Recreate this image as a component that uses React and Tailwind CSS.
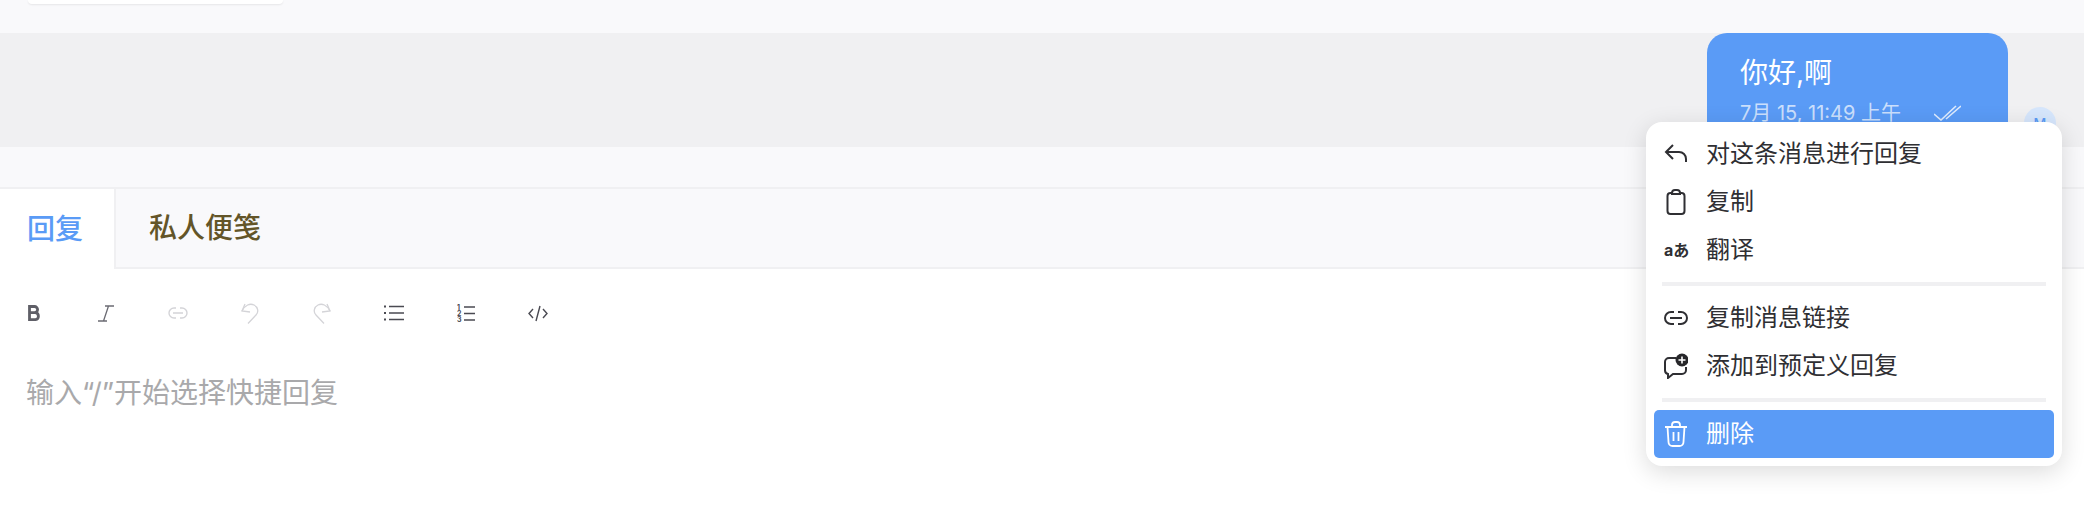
const cjk = "font-['Inter','Noto_Sans_CJK_SC',sans-serif]";

function BoldIcon() {
  return (
    <svg width="13" height="16" viewBox="0 0 13 16" fill="none" stroke="currentColor" strokeWidth="2.800">
      <path d="M1.500 1.500h5a3 3 0 0 1 0 6.200h-5zM1.500 7.700h6a3.500 3.500 0 0 1 0 6.900h-6z" />
    </svg>
  );
}

function ItalicIcon() {
  return (
    <svg width="16" height="17" viewBox="0 0 16 17" fill="none" stroke="currentColor" strokeWidth="1.300">
      <path d="M7 1h9M0 16h9M10.500 1L5.500 16" />
    </svg>
  );
}

function ChainIcon() {
  return (
    <svg width="20" height="12" viewBox="0 0 20 12" fill="none" stroke="currentColor" strokeWidth="1.400">
      <path d="M8 1H6a5 5 0 0 0 0 10h2M12 1h2a5 5 0 0 1 0 10h-2M5 6h10" />
    </svg>
  );
}

function UndoIcon({ flip }) {
  return (
    <svg width="18" height="21" viewBox="0 0 18 21" fill="none" stroke="currentColor" strokeWidth="1.300" className={flip ? "-scale-x-100" : ""}>
      <path d="M4 1L1 8l8 1" />
      <path d="M1 8C4 2 9 0 13 2c4 2 5 7 2 10l-8 8.500" />
    </svg>
  );
}

function ListIcon() {
  return (
    <svg width="20" height="16" viewBox="0 0 20 16" fill="none" stroke="currentColor" strokeWidth="1.500">
      <path d="M5 1.500h15M5 8h15M5 14.500h15" />
      <path d="M0 1.500h2M0 8h2M0 14.500h2" strokeWidth="1.800" />
    </svg>
  );
}

function OrderedIcon() {
  return (
    <svg width="18" height="18" viewBox="0 0 18 18" fill="none" stroke="currentColor" strokeWidth="1.500">
      <path d="M7 3h11M7 9.500h11M7 16h11" />
      <text x="0" y="5.500" fontSize="7" fontWeight="700" fill="currentColor" stroke="none">1</text>
      <text x="0" y="11.500" fontSize="7" fontWeight="700" fill="currentColor" stroke="none">2</text>
      <text x="0" y="17.500" fontSize="7" fontWeight="700" fill="currentColor" stroke="none">3</text>
    </svg>
  );
}

function CodeIcon() {
  return (
    <svg width="20" height="17" viewBox="0 0 20 17" fill="none" stroke="currentColor" strokeWidth="1.400">
      <path d="M5 4L1 8.500 5 13M15 4l4 4.500-4 4.500M12 1L8 16" />
    </svg>
  );
}

function ReplyIcon() {
  return (
    <svg width="24" height="24" viewBox="0 0 24 24" fill="none" stroke="currentColor" strokeWidth="2">
      <path d="M9 3l-7 7 7 7" />
      <path d="M2 10h13c4 0 7 3 7 7v3" />
    </svg>
  );
}

function ClipboardIcon() {
  return (
    <svg width="24" height="26" viewBox="0 0 24 26" fill="none" stroke="currentColor" strokeWidth="2">
      <rect x="3.500" y="4" width="17" height="21" rx="3" />
      <path d="M8 4c0-2 1-3 3-3h2c2 0 3 1 3 3v1H8z" fill="white" />
    </svg>
  );
}

function LinkIcon() {
  return (
    <svg width="24" height="16" viewBox="0 0 24 16" fill="none" stroke="currentColor" strokeWidth="2">
      <path d="M10 2H7a6 6 0 0 0 0 12h3M14 2h3a6 6 0 0 1 0 12h-3M6 8h12" />
    </svg>
  );
}

function CannedIcon() {
  return (
    <svg width="24" height="26" viewBox="0 0 24 26" fill="none" stroke="currentColor" strokeWidth="2">
      <path d="M12 5H5a4 4 0 0 0-4 4v8a4 4 0 0 0 3 4v4l5-4h9a4 4 0 0 0 4-4v-3" />
      <circle cx="18" cy="7" r="6.500" fill="#27272a" stroke="none" />
      <path d="M18 3.500v7M14.500 7h7" stroke="white" strokeWidth="1.600" />
    </svg>
  );
}

function TrashIcon() {
  return (
    <svg width="24" height="26" viewBox="0 0 24 26" fill="none" stroke="currentColor" strokeWidth="1.800">
      <path d="M1 6h22M8 6V4a3 3 0 0 1 3-3h2a3 3 0 0 1 3 3v2" />
      <path d="M3.500 6l1 15a4 4 0 0 0 4 4h7a4 4 0 0 0 4-4l1-15M9.500 11v9M14.500 11v9" />
    </svg>
  );
}

function MenuItem({ icon, label, active }) {
  return (
    <div className={`flex h-12 items-center rounded-[5px] px-2.5 text-[24px] ${active ? "bg-[#5a9bf6] text-white" : "text-[#2f2f33]"}`}>
      <span className="flex w-[42px] shrink-0 items-center">{icon}</span>
      <span>{label}</span>
    </div>
  );
}

function ToolButton({ color, children }) {
  return <span className={`flex w-6 justify-center ${color}`}>{children}</span>;
}

export default function App() {
  return (
    <div className={`relative h-[512px] w-[2084px] overflow-hidden bg-white ${cjk}`}>
      <div className="h-[33px] bg-[#f9f9fb] pl-7">
        <div className="h-[4px] w-[255px] rounded-b-xl bg-white shadow-[0_1px_2px_rgba(0,0,0,0.08)]" />
      </div>

      <div className="flex h-[114px] items-start justify-end overflow-hidden bg-[#f0f0f2] pr-[76px]">
        <div className="h-[120px] w-[301px] rounded-[20px] bg-[#5a9bf6] px-[33px] pt-[24px] text-white">
          <div className="text-[28px] leading-[32px]">你好,啊</div>
          <div className="mt-[11px] flex items-center text-[20px] leading-[26px] text-white/70">
            <span>7月 15, 11:49 上午</span>
            <svg className="ml-[33px] text-white/80" width="27" height="16" viewBox="0 0 27 16" fill="none" stroke="currentColor" strokeWidth="1.600">
              <path d="M0 9l7 6L22 1M12 14L27 1" />
            </svg>
          </div>
        </div>
      </div>

      <div className="h-[42px] border-b-2 border-[#f0f0f2] bg-[#f9f9fb]" />

      <div className="flex h-[80px] border-b-2 border-[#f0f0f2] bg-[#f9f9fb] text-[28px] font-medium">
        <div className="-mb-[2px] flex w-[116px] items-center border-r-2 border-[#f0f0f2] bg-white pl-[27px] text-[#5a9bf6]">回复</div>
        <div className="flex items-center pl-[33px] text-[#635528]">私人便笺</div>
      </div>

      <div className="mt-8 flex h-6 items-center gap-12 pl-[22px]">
        <ToolButton color="text-[#5f5f67]"><BoldIcon /></ToolButton>
        <ToolButton color="text-[#6b6b73]"><ItalicIcon /></ToolButton>
        <ToolButton color="text-[#d4d4d8]"><ChainIcon /></ToolButton>
        <ToolButton color="text-[#d4d4d8]"><UndoIcon /></ToolButton>
        <ToolButton color="text-[#d4d4d8]"><UndoIcon flip /></ToolButton>
        <ToolButton color="text-[#4a4a52]"><ListIcon /></ToolButton>
        <ToolButton color="text-[#4a4a52]"><OrderedIcon /></ToolButton>
        <ToolButton color="text-[#4a4a52]"><CodeIcon /></ToolButton>
      </div>

      <div className="mt-[50px] pl-[26px] text-[28px] leading-[36px] text-[#a9a9ab]">输入“/”开始选择快捷回复</div>

      <div className="absolute left-[2024px] top-[107px] flex h-8 w-8 items-center justify-center rounded-full bg-[#d6e6fc] text-[14px] font-medium text-[#5a9bf6]">M</div>

      <div className="absolute left-[1646px] top-[122px] w-[416px] rounded-[16px] bg-white p-2 shadow-[0_6px_24px_rgba(0,0,0,0.14)]">
        <MenuItem icon={<ReplyIcon />} label="对这条消息进行回复" />
        <MenuItem icon={<ClipboardIcon />} label="复制" />
        <MenuItem icon={<span className="text-[16px] font-bold leading-none">aあ</span>} label="翻译" />
        <div className="mx-2 my-2 h-1 bg-[#f0f0f2]" />
        <MenuItem icon={<LinkIcon />} label="复制消息链接" />
        <MenuItem icon={<CannedIcon />} label="添加到预定义回复" />
        <div className="mx-2 my-2 h-1 bg-[#f0f0f2]" />
        <MenuItem icon={<TrashIcon />} label="删除" active />
      </div>
    </div>
  );
}
